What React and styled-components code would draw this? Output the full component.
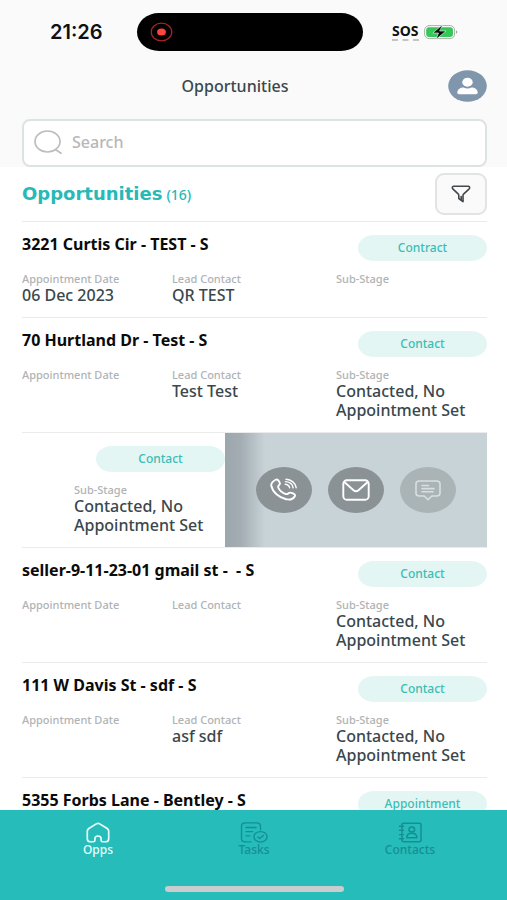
import React from "react";
import styled, { createGlobalStyle, css } from "styled-components";

const GlobalStyle = createGlobalStyle`
  *, *::before, *::after { box-sizing: border-box; }
  body {
    margin: 0;
    background: #ffffff;
    font-family: "Noto Sans", "Open Sans", sans-serif;
    color: #3a474c;
  }
  button, input { font: inherit; color: inherit; }
  h1, h2, h3, p, ul, dl, dd, dt { margin: 0; padding: 0; }
  ul { list-style: none; }
`;

const Screen = styled.div`
  display: flex;
  flex-direction: column;
  height: 100vh;
  overflow: hidden;
`;

const TopArea = styled.header`
  flex: none;
  background: #fafafa;
`;

const StatusBar = styled.div`
  display: grid;
  grid-template-columns: 1fr 226px 1fr;
  align-items: center;
  padding: 13px 8px 0 0;
`;

const Clock = styled.time`
  padding-left: 16px;
  text-align: center;
  font: 600 20px/24px Inter, sans-serif;
  color: #111111;
`;

const Island = styled.div`
  display: flex;
  align-items: center;
  height: 38px;
  padding-left: 13px;
  border-radius: 22px / 19px;
  background: #000000;
`;

const Signals = styled.div`
  display: flex;
  align-items: center;
  justify-content: center;
  gap: 5px;
  padding-right: 12px;
`;

const Sos = styled.span`
  height: 18px;
  border-bottom: 2px dashed #c4c4c4;
  font: 700 14px/15px "Noto Sans", sans-serif;
  color: #111111;
`;

const TitleBar = styled.div`
  display: flex;
  align-items: center;
  padding: 19px 20px 17px 22px;
`;

const PageTitle = styled.h1`
  flex: 1;
  text-align: center;
  font-size: 16px;
  line-height: 24px;
  font-weight: 500;
`;

const Avatar = styled.button`
  display: flex;
  padding: 0;
  border: 0;
  background: none;
`;

const SearchBox = styled.label`
  display: flex;
  align-items: center;
  gap: 10px;
  height: 48px;
  margin: 0 20px 0 22px;
  padding: 0 11px 2px 10px;
  border: 2px solid #dde2e2;
  border-radius: 8px;
  background: #ffffff;
`;

const SearchInput = styled.input`
  flex: 1;
  min-width: 0;
  border: 0;
  outline: 0;
  padding: 0;
  background: none;
  font-size: 16px;
  line-height: 24px;
  font-weight: 500;
  &::placeholder { color: #b8b8b8; opacity: 1; }
`;

const Main = styled.main`
  flex: 1;
  min-height: 0;
  padding: 0 20px 0 22px;
  overflow: hidden;
`;

const ListHeader = styled.div`
  display: flex;
  align-items: center;
  justify-content: space-between;
  height: 54px;
`;

const ListTitle = styled.h2`
  display: flex;
  align-items: baseline;
  gap: 4px;
  font: 700 18px/24px "DejaVu Sans", sans-serif;
  color: #27b9b7;
`;

const Count = styled.span`
  font: 500 14px/24px "Noto Sans", sans-serif;
`;

const FilterButton = styled.button`
  display: flex;
  align-items: center;
  justify-content: center;
  width: 52px;
  height: 42px;
  padding: 0;
  border: 2px solid #e1e4e4;
  border-radius: 9px;
  background: #fafafa;
`;

const Row = styled.li`
  display: flex;
  justify-content: ${(p) => (p.$open ? "flex-end" : "flex-start")};
  border-top: 1px solid #ebebeb;
  overflow: hidden;
`;

const Card = styled.article`
  flex: 0 0 100%;
  padding: 13px 0 12px;
`;

const CardHead = styled.div`
  display: flex;
  align-items: flex-start;
  justify-content: space-between;
  height: 26px;
  margin-bottom: 11px;
`;

const Address = styled.h3`
  flex: 1;
  min-width: 0;
  font-size: 16px;
  line-height: 18px;
  font-weight: 700;
  color: #0b0b0b;
  white-space: pre;
`;

const Stage = styled.span`
  width: 129px;
  border-radius: 16px / 13px;
  background: #e3f6f4;
  text-align: center;
  font-size: 12px;
  line-height: 26px;
  font-weight: 500;
  color: #3bbdb5;
`;

const Details = styled.dl`
  display: grid;
  grid-template-columns: 150fr 164fr 151fr;
`;

const Label = styled.dt`
  font-size: 11px;
  line-height: 14px;
  font-weight: 500;
  color: #afb3b5;
`;

const Value = styled.dd`
  min-height: 19px;
  font-size: 16px;
  line-height: 19px;
  font-weight: 500;
`;

const SwipePanel = styled.div`
  flex: 0 0 262px;
  display: flex;
  align-items: center;
  gap: 16px;
  padding-left: 31px;
  background:
    linear-gradient(90deg, #9ca6ad 0, #a3adb3 16px, rgba(200, 211, 216, 0) 40px),
    #c8d3d8;
`;

const ActionButton = styled.button`
  display: flex;
  align-items: center;
  justify-content: center;
  width: 56px;
  height: 46px;
  padding: 0;
  border: 0;
  border-radius: 50%;
  background: ${(p) => (p.$muted ? "#aab3b6" : "#8b9296")};
  color: ${(p) => (p.$muted ? "#d9dfe1" : "#ffffff")};
`;

const Footer = styled.footer`
  flex: none;
  display: flex;
  flex-direction: column;
  align-items: center;
  justify-content: space-between;
  height: 90px;
  padding: 12px 19px 8px 20px;
  background: #25bcba;
`;

const Tabs = styled.nav`
  display: flex;
  align-self: stretch;
`;

const Tab = styled.a`
  flex: 1;
  display: flex;
  flex-direction: column;
  align-items: center;
  text-decoration: none;
  font-size: 12px;
  line-height: 14px;
  font-weight: 500;
  color: #168f91;
  ${(p) => p.$active && css`color: #e9fffd;`}
`;

const HomeIndicator = styled.div`
  width: 179px;
  height: 6px;
  border-radius: 3px;
  background: #c9cdcd;
`;

const Icon = ({ w, h, box, sw = 1.5, children }) => (
  <svg
    width={w}
    height={h}
    viewBox={box}
    preserveAspectRatio="none"
    fill="none"
    stroke="currentColor"
    strokeWidth={sw}
    strokeLinecap="round"
    strokeLinejoin="round"
    aria-hidden="true"
  >
    {children}
  </svg>
);

const RecordIcon = () => (
  <Icon w={23} h={20} box="0 0 23 20" sw={1.2}>
    <ellipse cx="11.5" cy="10" rx="10.3" ry="8.8" stroke="#a82420" />
    <ellipse cx="11.5" cy="10" rx="4.4" ry="3.5" fill="#ff453a" stroke="none" />
  </Icon>
);

const BatteryIcon = () => (
  <Icon w={34} h={16} box="0 0 34 16" sw={1}>
    <rect x="0.6" y="1.6" width="30" height="13" rx="4.5" stroke="#a9b3aa" />
    <rect x="2.2" y="3.2" width="26.8" height="9.8" rx="3" fill="#35c759" stroke="none" />
    <path d="M32 6.2c1.800.6 1.800 3 0 3.600z" fill="#a5a5a5" stroke="none" />
    <path d="M18.500.8 8.800 9h5.700l-2.500 6.300L22 7h-6z" fill="#0a0a0a" stroke="#f4fff6" strokeWidth="0.6" />
  </Icon>
);

const AvatarIcon = () => (
  <Icon w={39} h={32} box="0 0 39 33">
    <ellipse cx="19.500" cy="16.500" rx="19.300" ry="16.300" fill="#8096ac" stroke="none" />
    <ellipse cx="19.500" cy="12.600" rx="5.200" ry="4.600" fill="#fff" stroke="none" />
    <path d="M9.300 23.500c0-3.600 3.200-5.500 6.200-5.500 1.300.7 2.500 1 4 1s2.700-.3 4-1c3 0 6.200 1.900 6.200 5.500 0 1-.8 1.500-2 1.500H11.300c-1.200 0-2-.5-2-1.500z" fill="#fff" stroke="none" />
  </Icon>
);

const SearchIcon = () => (
  <Icon w={28} h={24} box="0 0 28 24" sw={1.7}>
    <ellipse cx="13.500" cy="11.500" rx="12.500" ry="10.500" stroke="#bdbdbd" />
    <path d="M21.500 19.500 27 23.200" stroke="#bdbdbd" />
  </Icon>
);

const FunnelIcon = () => (
  <Icon w={20} h={18} box="0 0 20 18" sw={1.6}>
    <path d="M2.500 1.300h15c1.200 0 1.500 1.700.7 2.500l-5.400 5c-.5.500-.8.900-.8 1.600v6.300L7.800 13.500v-3.200c0-.6-.2-1-.7-1.500l-5.300-5c-.9-.8-.5-2.500.7-2.500z" stroke="#42484b" />
    <path d="M10.200 11.500v3" stroke="#42484b" />
  </Icon>
);

const CallIcon = () => (
  <Icon w={28} h={24} box="0 0 28 24" sw={1.900}>
    <path d="M5.600 1.800C7.200.8 8 1.700 9 3.200c1 1.400 1.500 2.300.3 3.600-.9.900-1.600 1.500-.9 3 1.200 2.600 3.700 4.800 6.800 6.100 1.700.7 2.500 0 3.500-.8 1.500-1 2.600-.6 4.200.3 1.800.9 2.800 1.700 1.700 3.200-1.600 2.400-5 3.500-8.600 2.600C8.900 19.600 2.600 14.200 1.300 7.800.8 5.200 3 3.300 5.600 1.800z" />
    <path d="M15.200 6.200c2.400.3 4 1.600 4.400 3.500M15.500 3.600c4.200.4 7.200 2.800 7.600 6.200M16 1.200c5.300.4 9.600 3.900 10.200 8.500" strokeWidth="1.400" />
  </Icon>
);

const MailIcon = () => (
  <Icon w={28} h={22} box="0 0 28 22" sw={1.9}>
    <rect x="1.300" y="1.300" width="25.400" height="19.400" rx="3.500" />
    <path d="M2.300 3l9.200 8.200c1.600 1.400 3.400 1.400 5 0L25.700 3" />
  </Icon>
);

const ChatIcon = () => (
  <Icon w={26} h={21} box="0 0 26 21" sw={1.6}>
    <path d="M4.500 1h17c2.200 0 3.500 1.100 3.500 2.800v9.400c0 1.700-1.300 2.800-3.500 2.800h-4.700L13 19.700 9.200 16H4.500C2.300 16 1 14.900 1 13.200V3.800C1 2.100 2.300 1 4.500 1z" />
    <path d="M7 5.500h6.500M7 8.600h12M7 11.700h11" />
  </Icon>
);

const HomeIcon = () => (
  <Icon w={24} h={21} box="0 0 24 22" sw={1.7}>
    <path d="M10.300 2 2.800 6.800C1.700 7.600 1.300 8.300 1.300 9.500v8c0 2 1.200 3.200 3.300 3.200h2.800c1.200 0 1.500-.8 1.500-1.700v-1.500c0-3.800 6.200-3.800 6.200 0V19c0 .9.400 1.700 1.500 1.700h2.800c2.100 0 3.300-1.200 3.300-3.200v-8c0-1.200-.4-1.900-1.500-2.700L13.700 2c-1.200-.8-2.200-.8-3.400 0z" />
  </Icon>
);

const TasksIcon = () => (
  <Icon w={28} h={21} box="0 0 28 22" sw={1.4}>
    <path d="M11 20.800H5.500C3 20.800 1.500 19.600 1.500 17.500v-13C1.500 2.400 3 1 5.500 1h11c2.500 0 4 1.400 4 3.500V8" />
    <path d="M6 5.800h10M6 10h6.500M6 14.500h4" />
    <ellipse cx="20.500" cy="15.500" rx="6.600" ry="5.500" />
    <path d="m17.800 15.600 2 1.700 3.600-3.200" />
  </Icon>
);

const ContactsIcon = () => (
  <Icon w={24} h={21} box="0 0 24 22" sw={1.5}>
    <rect x="4" y="1.300" width="19" height="19.400" rx="1.800" />
    <path d="M1.500 4.500h4M1.500 8.800h4M1.500 13.200h4M1.500 17.500h4" />
    <ellipse cx="13.800" cy="7.800" rx="2.800" ry="2.600" />
    <path d="M8.700 16.500c0-3 1.900-4.700 5.100-4.700s5.100 1.700 5.100 4.700z" />
  </Icon>
);

const CONTACTED = "Contacted, No Appointment Set";

const opportunities = [
  { id: 1, address: "3221 Curtis Cir - TEST - S", stage: "Contract", date: "06 Dec 2023", lead: "QR TEST" },
  { id: 2, address: "70 Hurtland Dr - Test - S", stage: "Contact", lead: "Test Test", subStage: CONTACTED },
  { id: 3, stage: "Contact", subStage: CONTACTED, open: true },
  { id: 4, address: "seller-9-11-23-01 gmail st -  - S", stage: "Contact", subStage: CONTACTED },
  { id: 5, address: "111 W Davis St - sdf - S", stage: "Contact", lead: "asf sdf", subStage: CONTACTED },
  { id: 6, address: "5355 Forbs Lane - Bentley - S", stage: "Appointment" },
];

const Field = ({ label, value }) => (
  <div>
    <Label>{label}</Label>
    <Value>{value}</Value>
  </div>
);

const Opportunity = ({ item }) => (
  <Row $open={item.open}>
    <Card>
      <CardHead>
        <Address as={item.address ? "h3" : "div"}>{item.address}</Address>
        <Stage>{item.stage}</Stage>
      </CardHead>
      <Details>
        <Field label={item.open ? "" : "Appointment Date"} value={item.date} />
        <Field label={item.open ? "" : "Lead Contact"} value={item.lead} />
        <Field label="Sub-Stage" value={item.subStage} />
      </Details>
    </Card>
    {item.open && (
      <SwipePanel>
        <ActionButton type="button" aria-label="Call"><CallIcon /></ActionButton>
        <ActionButton type="button" aria-label="Email"><MailIcon /></ActionButton>
        <ActionButton type="button" aria-label="Message" $muted><ChatIcon /></ActionButton>
      </SwipePanel>
    )}
  </Row>
);

export default function App() {
  return (
    <Screen>
      <GlobalStyle />
      <TopArea>
        <StatusBar>
          <Clock>21:26</Clock>
          <Island><RecordIcon /></Island>
          <Signals>
            <Sos>SOS</Sos>
            <BatteryIcon />
          </Signals>
        </StatusBar>
        <TitleBar>
          <PageTitle>Opportunities</PageTitle>
          <Avatar type="button" aria-label="Profile"><AvatarIcon /></Avatar>
        </TitleBar>
        <SearchBox>
          <SearchIcon />
          <SearchInput type="search" placeholder="Search" aria-label="Search" />
        </SearchBox>
      </TopArea>
      <Main>
        <ListHeader>
          <ListTitle>Opportunities <Count>(16)</Count></ListTitle>
          <FilterButton type="button" aria-label="Filter"><FunnelIcon /></FilterButton>
        </ListHeader>
        <ul>
          {opportunities.map((item) => <Opportunity key={item.id} item={item} />)}
        </ul>
      </Main>
      <Footer>
        <Tabs>
          <Tab href="#opps" $active><HomeIcon />Opps</Tab>
          <Tab href="#tasks"><TasksIcon />Tasks</Tab>
          <Tab href="#contacts"><ContactsIcon />Contacts</Tab>
        </Tabs>
        <HomeIndicator />
      </Footer>
    </Screen>
  );
}
